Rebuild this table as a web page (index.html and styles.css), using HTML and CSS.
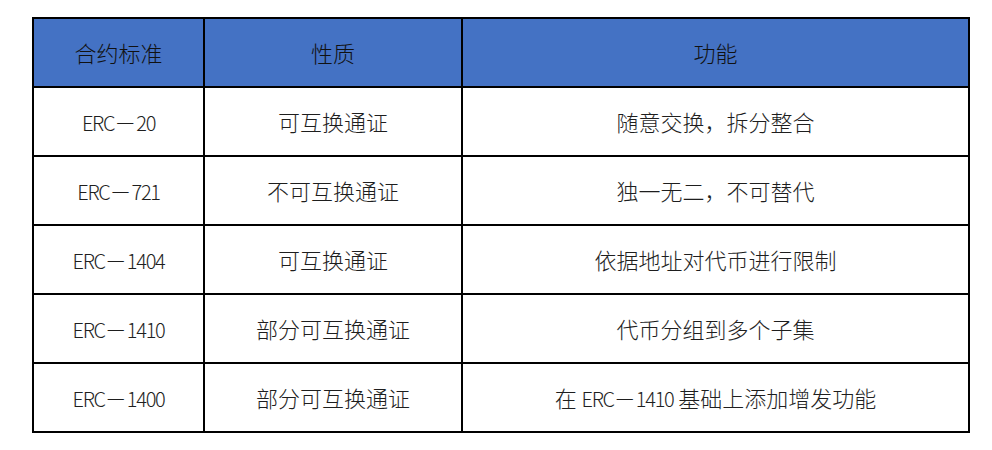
FILE: index.html
```html
<!DOCTYPE html>
<html lang="zh-CN">
<head>
<meta charset="utf-8">
<link rel="stylesheet" href="styles.css">
</head>
<body>
<div class="table">
  <div class="cell head">合约标准</div>
  <div class="cell head">性质</div>
  <div class="cell head">功能</div>

  <div class="cell"><span class="latin">ERC</span>－<span class="latin">20</span></div>
  <div class="cell">可互换通证</div>
  <div class="cell">随意交换，拆分整合</div>

  <div class="cell"><span class="latin">ERC</span>－<span class="latin">721</span></div>
  <div class="cell">不可互换通证</div>
  <div class="cell">独一无二，不可替代</div>

  <div class="cell"><span class="latin">ERC</span>－<span class="latin">1404</span></div>
  <div class="cell">可互换通证</div>
  <div class="cell">依据地址对代币进行限制</div>

  <div class="cell"><span class="latin">ERC</span>－<span class="latin">1410</span></div>
  <div class="cell">部分可互换通证</div>
  <div class="cell">代币分组到多个子集</div>

  <div class="cell"><span class="latin">ERC</span>－<span class="latin">1400</span></div>
  <div class="cell">部分可互换通证</div>
  <div class="cell">在 <span class="latin">ERC</span>－<span class="latin">1410</span> 基础上添加增发功能</div>
</div>
</body>
</html>
```

FILE: styles.css
```css
html, body {
  margin: 0;
  padding: 0;
  background: #ffffff;
}
body {
  padding: 17px 0 0 32px;
  font-family: "Noto Sans CJK SC", "Noto Sans", sans-serif;
}
.table {
  display: grid;
  grid-template-columns: 169px 256px 505px;
  grid-auto-rows: 67px;
  gap: 2px;
  padding: 2px;
  background: #000000;
  width: max-content;
}
.cell {
  background: #ffffff;
  display: block;
  text-align: center;
  line-height: 67px;
  font-size: 22px;
  font-weight: 300;
  color: #1e1e1e;
  white-space: pre;
}
.cell.head {
  background: #4472c4;
  color: #111111;
}
.latin {
  font-family: "Noto Sans CJK SC", sans-serif;
  font-weight: 300;
  font-size: 20px;
  letter-spacing: -1.3px;
}
```
